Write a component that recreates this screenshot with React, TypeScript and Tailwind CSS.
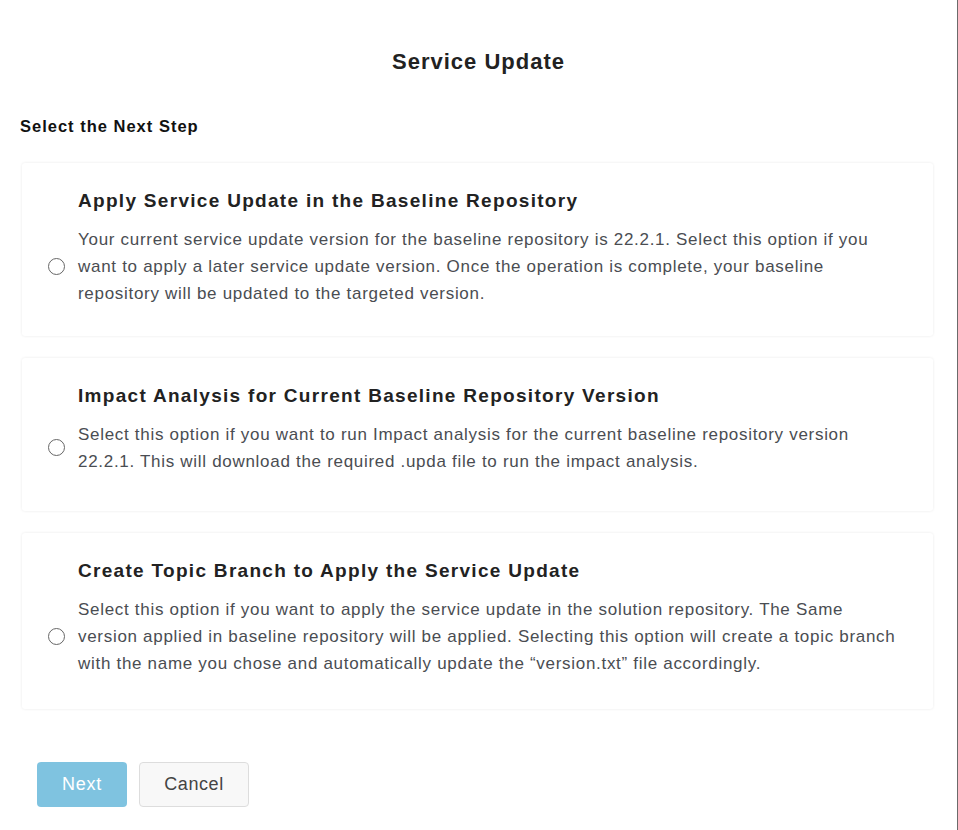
import React, { useState } from 'react';

type Option = { id: string; title: string; body: string; pad: string };

const OPTIONS: Option[] = [
  {
    id: 'apply',
    title: 'Apply Service Update in the Baseline Repository',
    body: 'Your current service update version for the baseline repository is 22.2.1. Select this option if you want to apply a later service update version. Once the operation is complete, your baseline repository will be updated to the targeted version.',
    pad: 'pb-[28px]',
  },
  {
    id: 'impact',
    title: 'Impact Analysis for Current Baseline Repository Version',
    body: 'Select this option if you want to run Impact analysis for the current baseline repository version 22.2.1. This will download the required .upda file to run the impact analysis.',
    pad: 'pb-[36px]',
  },
  {
    id: 'branch',
    title: 'Create Topic Branch to Apply the Service Update',
    body: 'Select this option if you want to apply the service update in the solution repository. The Same version applied in baseline repository will be applied. Selecting this option will create a topic branch with the name you chose and automatically update the \u201cversion.txt\u201d file accordingly.',
    pad: 'pb-[31px]',
  },
];

const App: React.FC = () => {
  const [selected, setSelected] = useState<string | null>(null);

  return (
    <div className="min-h-screen w-[958px] bg-white border-r border-[#6b6b6b] font-['Liberation_Sans',Arial,sans-serif] text-[#222]">
      <div className="pt-[48px] px-5">
        <h1 className="text-center text-[22px] leading-[28px] font-bold tracking-[1px] text-[#222]">Service Update</h1>
        <h2 className="mt-[40px] text-[16.5px] leading-[20px] font-bold tracking-[1px] text-[#111]">Select the Next Step</h2>

        <div className="mt-[27px] flex flex-col gap-[22px] pl-[2px] pr-[4px]">
          {OPTIONS.map((o) => (
            <label
              key={o.id}
              className={`block bg-white rounded-[3px] shadow-[0_0_3px_rgba(0,0,0,0.09)] pl-[26px] pr-6 pt-[26px] ${o.pad} cursor-pointer`}
            >
              <div className="pl-[30px] text-[19px] leading-[24px] font-bold text-[#222] tracking-[1.3px]">{o.title}</div>
              <div className="mt-[13px] flex items-center gap-[13px]">
                <input
                  type="radio"
                  name="step"
                  checked={selected === o.id}
                  onChange={() => setSelected(o.id)}
                  className="sr-only"
                />
                <span className="shrink-0 w-[17px] h-[17px] rounded-full border-[1.5px] border-[#666] bg-white flex items-center justify-center">
                  {selected === o.id && <span className="w-[9px] h-[9px] rounded-full bg-[#2b8fc4]" />}
                </span>
                <p className="text-[17px] leading-[27.2px] tracking-[0.7px] text-[#4a4d52] max-w-[819px]">{o.body}</p>
              </div>
            </label>
          ))}
        </div>

        <div className="mt-[53px] pl-[17px] flex gap-3">
          <button className="w-[90px] h-[45px] rounded-[4px] bg-[#7fc3e0] text-white text-[18px] tracking-[0.8px]">Next</button>
          <button className="w-[110px] h-[45px] rounded-[4px] bg-[#f8f8f8] border border-[#ddd] text-[#444] text-[18px] tracking-[0.6px]">Cancel</button>
        </div>
      </div>
    </div>
  );
};

export default App;
